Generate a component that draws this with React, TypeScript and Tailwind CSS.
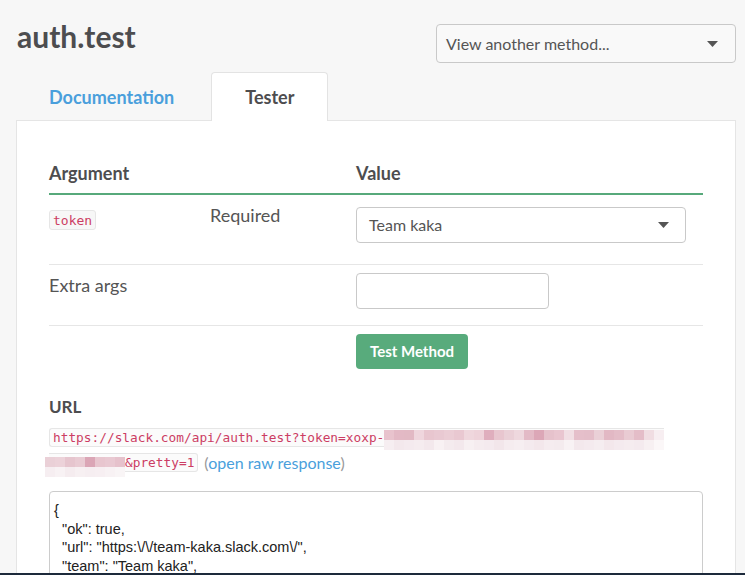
import React from 'react';

const line1Top = [
  '#e8c3cd', '#e3b9c5', '#e2b9c4', '#efd6dd', '#e8c6cf', '#e9c9d2', '#ebcdd5',
  '#e9c8d1', '#efd7dd', '#eed3da', '#dfaebd', '#e8c6cf', '#ead0d7', '#eed8de',
  '#e3bac6', '#dca7b7', '#e6c2cc', '#e9c6d0', '#f1dfe4', '#e5bfca', '#e4bec9',
  '#ead0d7', '#e2b8c4', '#e4bdc8', '#e9cbd3', '#e4bdc8', '#f0dde2', '#f7eef1',
];
const line1Bottom = [
  '#f6eef1', '#f3e8ec', '#f4eaee', '#f5ecef', '#f3e8ec', '#f8f1f3', '#f4ebee',
  '#f3e8ec', '#f7f0f2', '#f5ecef', '#f4eaee', '#f2e6ea', '#f5ecef', '#f6eef1',
  '#f4eaee', '#f3e7eb', '#f5ecef', '#f4ebee', '#f8f2f4', '#f3e8ec', '#f4eaee',
  '#f5edf0', '#f3e7eb', '#f4eaee', '#f5ecef', '#f4eaee', '#f7f0f2', '#fbf7f8',
];
const line2Top = ['#ead0d7', '#ecd2d9', '#e6c5ce', '#e9cbd3', '#dba6b6', '#e8c6cf', '#e9c9d2', '#e6c2cc'];
const line2Bottom = ['#f6eef1', '#f8f2f4', '#f5ecef', '#f7f0f2', '#f6eef1', '#f7eff2', '#f8f2f4', '#f9f5f6'];

const json = [
  '{',
  '  "ok": true,',
  '  "url": "https:\\/\\/team-kaka.slack.com\\/",',
  '  "team": "Team kaka",',
  '  "user": "kaka",',
  '  "team_id": "T0G4Q2K8B",',
  '  "user_id": "U0G4Q2K9D"',
  '}',
];

function Caret() {
  return (
    <svg width="11" height="6" viewBox="0 0 11 6">
      <polygon points="0,0 11,0 5.5,6" fill="#555555" />
    </svg>
  );
}

function Redacted({ top, bottom }: { top: string[]; bottom: string[] }) {
  return (
    <span className="inline-flex flex-col translate-y-[2px]">
      <span className="flex">
        {top.map((c, i) => (
          <span key={i} className="w-[10px] h-[10px]" style={{ backgroundColor: c }} />
        ))}
      </span>
      <span className="flex">
        {bottom.map((c, i) => (
          <span key={i} className="w-[10px] h-[10px]" style={{ backgroundColor: c }} />
        ))}
      </span>
    </span>
  );
}

export default function App() {
  return (
    <div className="min-h-screen bg-[#f7f7f7] font-['Lato','Noto_Sans',sans-serif] text-[#505050]">
      <div className="pl-4 pr-[9px]">
        <div className="flex items-start justify-between">
          <h1 className="mt-[18px] pl-px text-[30px] leading-[36px] font-bold text-[#4d4d4f]">auth.test</h1>
          <div className="mt-6 flex h-[39px] w-[300px] items-center justify-between rounded border border-[#c9c9c9] bg-[#f9f9f9] pl-[9px] pr-[17px]">
            <span className="text-[16px] text-[#555555]">View another method...</span>
            <Caret />
          </div>
        </div>

        <div className="relative z-10 -mb-px mt-[9px] flex gap-1">
          <div className="px-[33px] pt-[13px] pb-3 text-[18px] leading-[24px] font-bold text-[#4a9fdc]">
            Documentation
          </div>
          <div className="rounded-t border border-b-0 border-[#e3e3e3] bg-white px-[33px] pt-3 pb-3 text-[18px] leading-[24px] font-bold text-[#4d4d4f]">
            Tester
          </div>
        </div>

        <div className="border border-[#e5e5e5] bg-white px-8 pt-10 pb-10">
          <div className="grid grid-cols-[161px_146px_1fr] border-b-2 border-[#57a97b] pb-2 text-[18px] leading-[24px] font-bold text-[#4d4d4f]">
            <div>Argument</div>
            <div />
            <div>Value</div>
          </div>

          <div className="grid grid-cols-[161px_146px_1fr] items-start border-b border-[#e6e6e6] pt-2 pb-[21px]">
            <div className="pt-1">
              <code className="inline-block rounded-[3px] border border-[#e6e6e6] bg-[#f7f7f7] px-[3px] pt-px font-['DejaVu_Sans_Mono',monospace] text-[13px] leading-[17px] text-[#cc3d63]">
                token
              </code>
            </div>
            <div className="text-[18px] leading-[24px] text-[#555555]">Required</div>
            <div className="mt-1 flex h-9 w-[330px] items-center justify-between rounded border border-[#c9c9c9] bg-white pl-3 pr-[16px]">
              <span className="text-[16px] text-[#555555]">Team kaka</span>
              <Caret />
            </div>
          </div>

          <div className="grid grid-cols-[161px_146px_1fr] items-start border-b border-[#e6e6e6] pt-2 pb-[16px]">
            <div className="text-[18px] leading-[24px] text-[#555555]">Extra args</div>
            <div />
            <div className="h-9 w-[193px] rounded border border-[#c9c9c9] bg-white" />
          </div>

          <div className="grid grid-cols-[161px_146px_1fr] pt-2">
            <div />
            <div />
            <div>
              <button className="h-[35px] w-[112px] rounded bg-[#58ab7c] text-[15px] font-bold text-white">
                Test Method
              </button>
            </div>
          </div>

          <div className="mt-[26px] text-[17px] leading-[24px] font-bold text-[#4d4d4f]">URL</div>

          <div className="mt-[6px] flex h-[25px] items-center">
            <span className="flex h-[19px] items-center rounded-l-[3px] border border-r-0 border-[#e6e6e6] bg-[#fbfbfb] pl-[3px] font-['DejaVu_Sans_Mono',monospace] text-[12.8px] text-[#cc3d63]">
              https://slack.com/api/auth.test?token=xoxp-
              <Redacted top={line1Top} bottom={line1Bottom} />
            </span>
          </div>
          <div className="flex h-[25px] items-center">
            <span className="flex h-[19px] items-center rounded-r-[3px] border border-l-0 border-[#e6e6e6] bg-[#fbfbfb] pr-[3px] font-['DejaVu_Sans_Mono',monospace] text-[12.8px] text-[#cc3d63]">
              <span className="-ml-[4px]">
                <Redacted top={line2Top} bottom={line2Bottom} />
              </span>
              &amp;pretty=1
            </span>
            <span className="ml-[6px] text-[16px] text-[#999999]">
              (<span className="text-[#4a9fdc]">open raw response</span>)
            </span>
          </div>

          <pre className="mt-4 rounded border border-[#cccccc] bg-white pl-1 pt-[9px] pb-3 font-['Liberation_Sans',Arial,sans-serif] text-[14.5px] leading-[18.5px] text-[#222222]">
            {json.join('\n')}
          </pre>
        </div>
      </div>
      <div className="fixed bottom-0 left-0 right-0 h-[2px] bg-[#1d2a3b]" />
    </div>
  );
}
